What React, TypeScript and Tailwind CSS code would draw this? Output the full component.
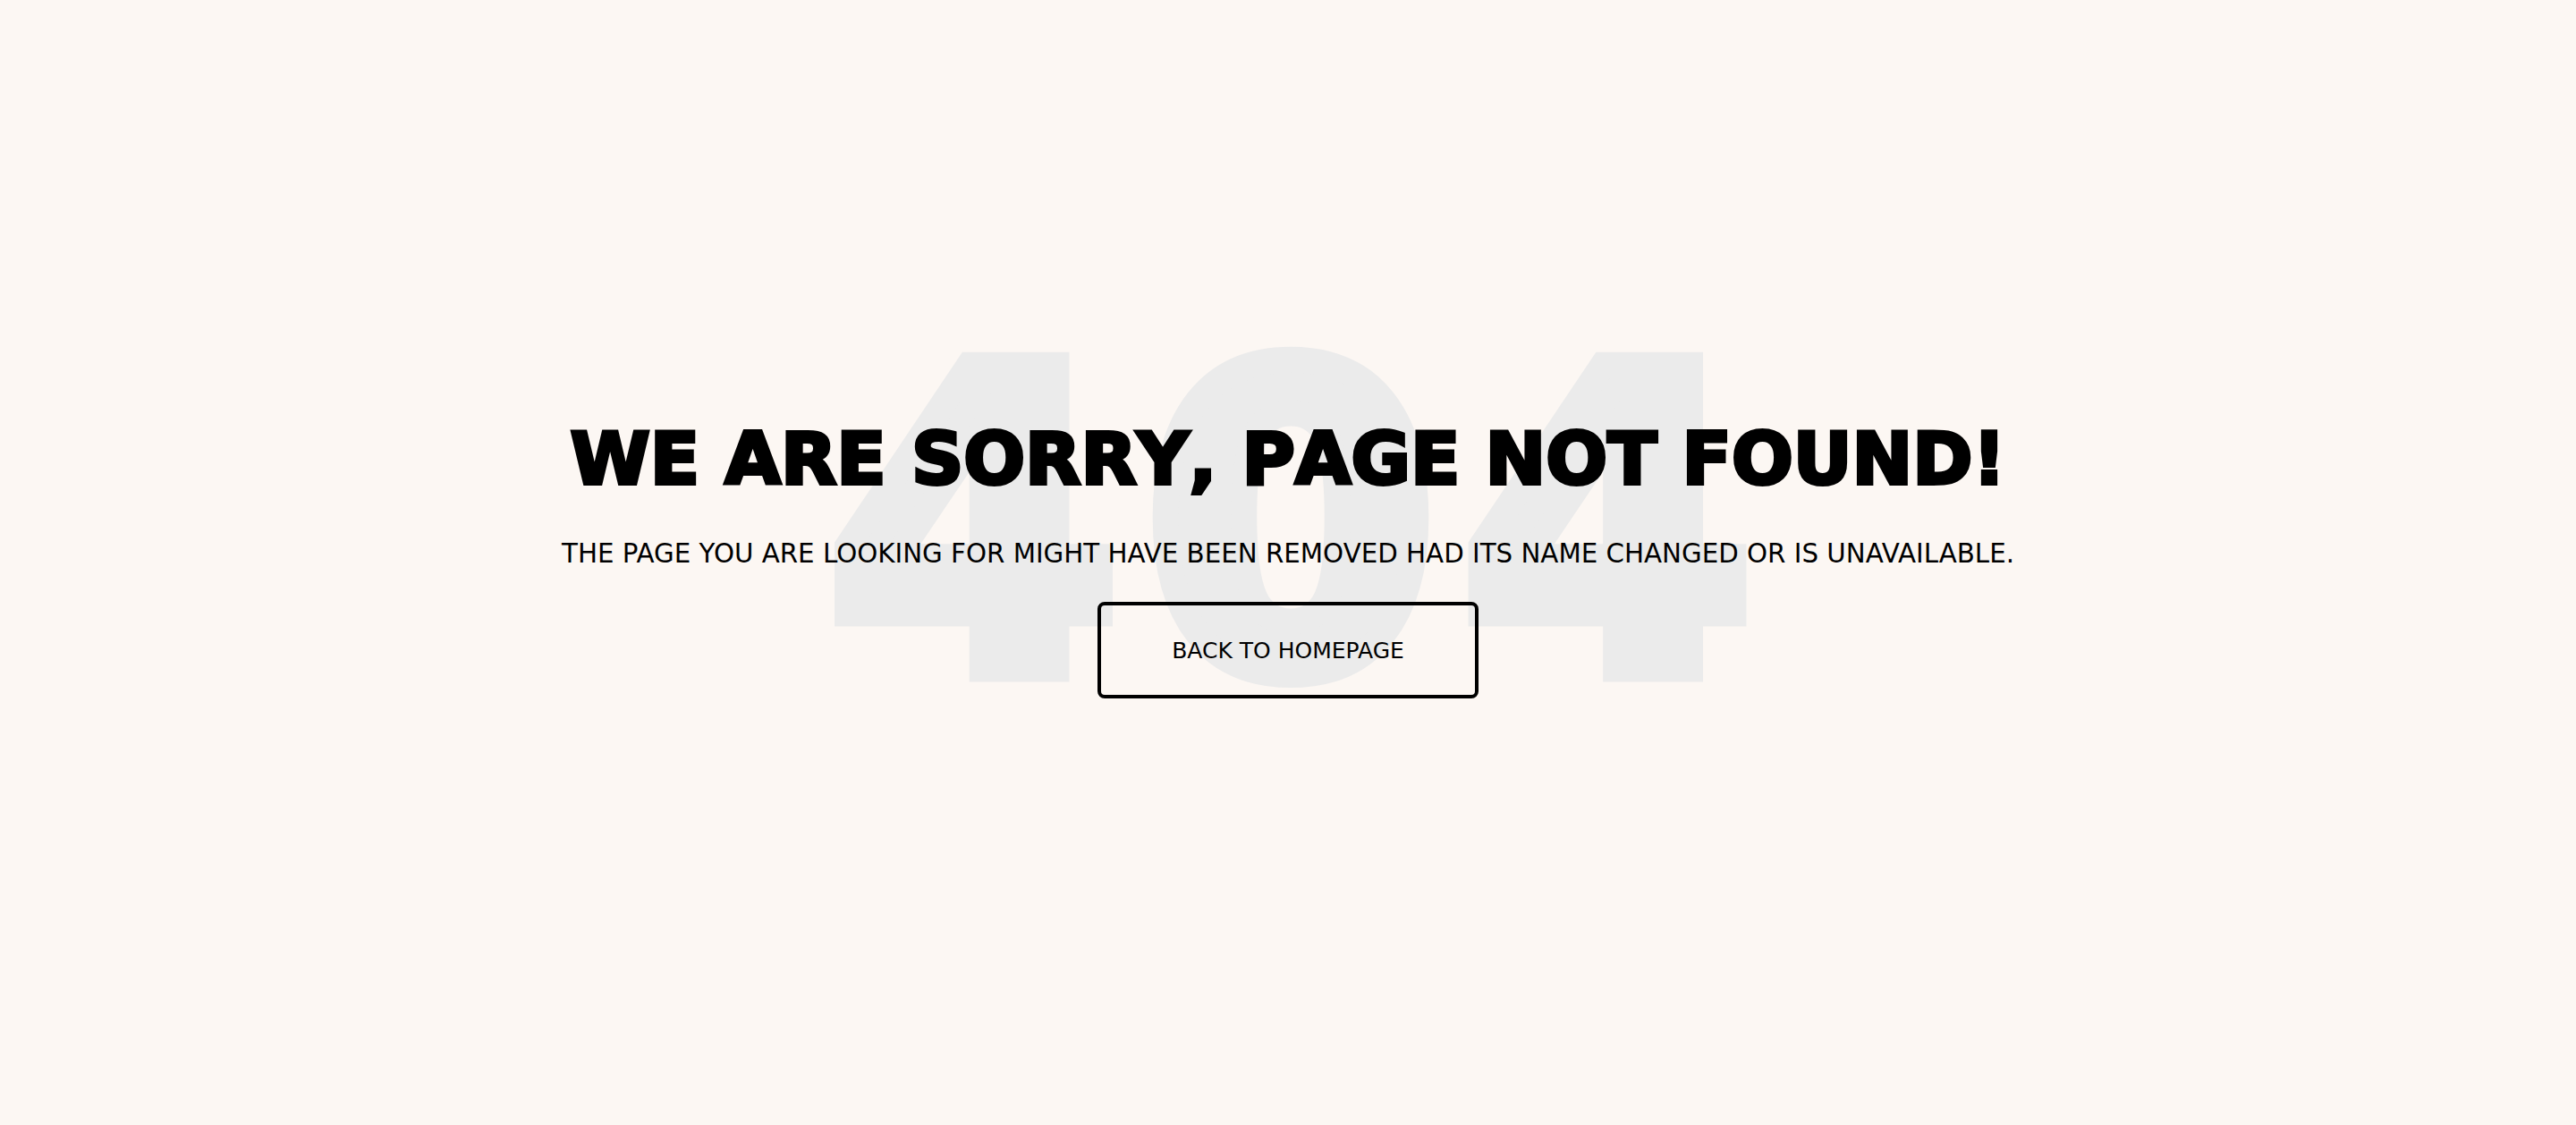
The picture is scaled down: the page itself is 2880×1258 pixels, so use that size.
import React from "react";

export default function App() {
  return (
    <div className="relative h-[1258px] w-full overflow-hidden bg-[#fcf7f3] font-['DejaVu_Sans',sans-serif] text-black">
      <div className="pointer-events-none absolute left-0 right-0 top-[354px] select-none pl-[36px] text-center text-[466px] font-bold leading-none tracking-[30px] text-[#ebebeb] [-webkit-text-stroke:29px_#ebebeb]">
        404
      </div>
      <div className="relative z-10 flex h-full flex-col items-center justify-center pb-[4px]">
        <h1 className="text-[81px] font-bold leading-none [font-kerning:none] [-webkit-text-stroke:4px_#000]">
          WE ARE SORRY, PAGE NOT FOUND!
        </h1>
        <p className="mt-[51px] text-[29.3px] leading-none">
          THE PAGE YOU ARE LOOKING FOR MIGHT HAVE BEEN REMOVED HAD ITS NAME CHANGED OR IS UNAVAILABLE.
        </p>
        <a
          href="#"
          className="mt-[39px] flex h-[108px] w-[426px] items-center justify-center rounded-[8px] border-4 border-black text-[25px] leading-none text-black"
        >
          BACK TO HOMEPAGE
        </a>
      </div>
    </div>
  );
}
